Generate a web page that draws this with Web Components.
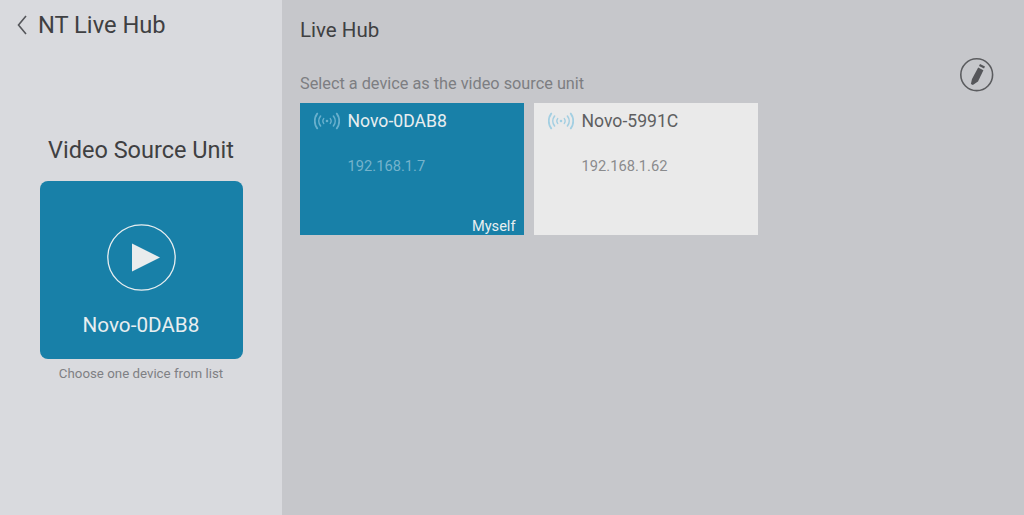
<!DOCTYPE html>
<html>
<head>
<meta charset="utf-8">
<title>NT Live Hub</title>
<style>
  html, body { margin: 0; height: 100%; }
  body { font-family: Roboto, "Liberation Sans", sans-serif; overflow: hidden; }
</style>
</head>
<body>
<hub-app></hub-app>

<script>
const WIFI_ICON = /* html */ `
  <svg width="26" height="18" viewBox="0 0 26 18" fill="none" stroke="currentColor" stroke-linecap="round">
    <circle cx="13" cy="9" r="1.3" fill="currentColor" stroke="none"/>
    <path d="M9.800 6.400a4.200 4.200 0 0 0 0 5.200M16.200 6.400a4.200 4.200 0 0 1 0 5.200" stroke-width="1.300"/>
    <path d="M6.600 4a8 8 0 0 0 0 10M19.400 4a8 8 0 0 1 0 10" stroke-width="1.600"/>
    <path d="M3.200 1.600a12.500 12.500 0 0 0 0 14.800M22.800 1.600a12.500 12.500 0 0 1 0 14.800" stroke-width="1.800"/>
  </svg>`;

class SourcePanel extends HTMLElement {
  constructor() {
    super();
    this.attachShadow({ mode: 'open' });
    this.shadowRoot.innerHTML = /* html */ `
    <style>
      :host {
        display: flex;
        flex-direction: column;
        align-items: center;
        box-sizing: border-box;
        width: 282px;
        height: 515px;
        background: #d9dade;
        color: #3f4042;
      }
      .top {
        align-self: stretch;
        display: flex;
        align-items: center;
        gap: 11px;
        height: 50px;
        padding-left: 17px;
        font-size: 23.7px;
      }
      h2 {
        margin: 85px 0 16px;
        height: 30px;
        font-weight: 400;
        font-size: 23.5px;
        line-height: 30px;
      }
      .unit {
        box-sizing: border-box;
        display: flex;
        flex-direction: column;
        align-items: center;
        width: 203px;
        height: 178px;
        padding-top: 43px;
        border-radius: 8px;
        background: #1880a8;
        color: #e8eef0;
        font-size: 20.7px;
      }
      .unit span { margin-top: 21px; line-height: 26px; }
      p {
        margin: 7px 0 0;
        font-size: 13.3px;
        line-height: 16px;
        color: #7f8084;
      }
    </style>
    <div class="top">
      <svg width="10" height="20" viewBox="0 0 10 20" fill="none" stroke="#55565a" stroke-width="1.6">
        <path d="M9 1 1.500 10 9 19"/>
      </svg>
      <span>NT Live Hub</span>
    </div>
    <h2>Video Source Unit</h2>
    <div class="unit">
      <svg width="69" height="67" viewBox="0 0 69 67" fill="none">
        <ellipse cx="34.500" cy="33.500" rx="33.700" ry="32.700" stroke="#e8eef0" stroke-width="1.3"/>
        <path d="M25 19.500 53 33.500 25 47.500Z" fill="#e9eced"/>
      </svg>
      <span>Novo-0DAB8</span>
    </div>
    <p>Choose one device from list</p>`;
  }
}

class DeviceCard extends HTMLElement {
  static get observedAttributes() { return ['ip', 'note']; }

  constructor() {
    super();
    this.attachShadow({ mode: 'open' });
  }

  connectedCallback() {
    this.render();
  }

  render() {
    const note = this.getAttribute('note');
    this.shadowRoot.innerHTML = /* html */ `
    <style>
      :host {
        display: grid;
        grid-template-columns: 47.5px 1fr;
        grid-template-rows: 36px 37px 1fr auto;
        box-sizing: border-box;
        width: 224px;
        height: 132px;
        background: #eaeaea;
        color: #5e5f61;
      }
      :host([self]) {
        background: #1880a8;
        color: #e8eef0;
      }
      .icon {
        grid-column: 1;
        grid-row: 1;
        display: flex;
        align-items: center;
        padding-left: 14px;
        color: #a3cfe2;
      }
      :host([self]) .icon { color: #69b0cd; }
      .name {
        grid-column: 2;
        grid-row: 1;
        align-self: center;
        font-size: 17.6px;
      }
      .ip {
        grid-column: 2;
        grid-row: 2;
        align-self: end;
        font-size: 14.7px;
        line-height: 20px;
        color: #8a8b8d;
      }
      :host([self]) .ip { color: #74b3cc; }
      .note {
        grid-column: 1 / 3;
        grid-row: 4;
        justify-self: end;
        padding-right: 8.5px;
        font-size: 14.6px;
        line-height: 18px;
      }
    </style>
    <div class="icon">${WIFI_ICON}</div>
    <div class="name"><slot></slot></div>
    <div class="ip">${this.getAttribute('ip')}</div>
    ${note ? `<div class="note">${note}</div>` : ''}`;
  }
}

class HubList extends HTMLElement {
  constructor() {
    super();
    this.attachShadow({ mode: 'open' });
    this.shadowRoot.innerHTML = /* html */ `
    <style>
      :host {
        flex: 1;
        display: grid;
        grid-template-columns: 1fr 34px;
        grid-template-rows: 60px 43px auto;
        box-sizing: border-box;
        height: 515px;
        padding: 0 30px 0 18px;
        background: #c6c7cb;
      }
      h1 {
        grid-column: 1;
        margin: 0;
        padding-top: 17px;
        font-weight: 400;
        font-size: 20.5px;
        line-height: 26px;
        color: #3f4042;
      }
      .hint {
        grid-column: 1;
        grid-row: 2;
        padding-top: 15px;
        font-size: 16.3px;
        line-height: 18px;
        color: #7d7e82;
      }
      .edit {
        grid-column: 2;
        grid-row: 1 / 3;
        align-self: start;
        margin-top: 58px;
        line-height: 0;
      }
      .cards {
        grid-column: 1 / 3;
        grid-row: 3;
        display: flex;
        gap: 10px;
      }
    </style>
    <h1>Live Hub</h1>
    <div class="hint">Select a device as the video source unit</div>
    <div class="edit">
      <svg width="34" height="34" viewBox="0 0 34 34" fill="none">
        <circle cx="16.700" cy="16.700" r="15.900" stroke="#5b5c5f" stroke-width="1.6"/>
        <path d="M20 6 25 8.600 24 10.600 19 8Z" fill="#55565a"/>
        <path d="M18.200 9.600 23.400 12.200 18 23.500 12.800 27 10.900 26 12 21Z" fill="#55565a"/>
      </svg>
    </div>
    <div class="cards"><slot></slot></div>`;
  }
}

class HubApp extends HTMLElement {
  constructor() {
    super();
    this.attachShadow({ mode: 'open' });
    this.shadowRoot.innerHTML = /* html */ `
    <style>
      :host {
        display: flex;
        width: 1024px;
        height: 515px;
      }
    </style>
    <source-panel></source-panel>
    <hub-list>
      <device-card self ip="192.168.1.7" note="Myself">Novo-0DAB8</device-card>
      <device-card ip="192.168.1.62">Novo-5991C</device-card>
    </hub-list>`;
  }
}

customElements.define('source-panel', SourcePanel);
customElements.define('device-card', DeviceCard);
customElements.define('hub-list', HubList);
customElements.define('hub-app', HubApp);
</script>
</body>
</html>
